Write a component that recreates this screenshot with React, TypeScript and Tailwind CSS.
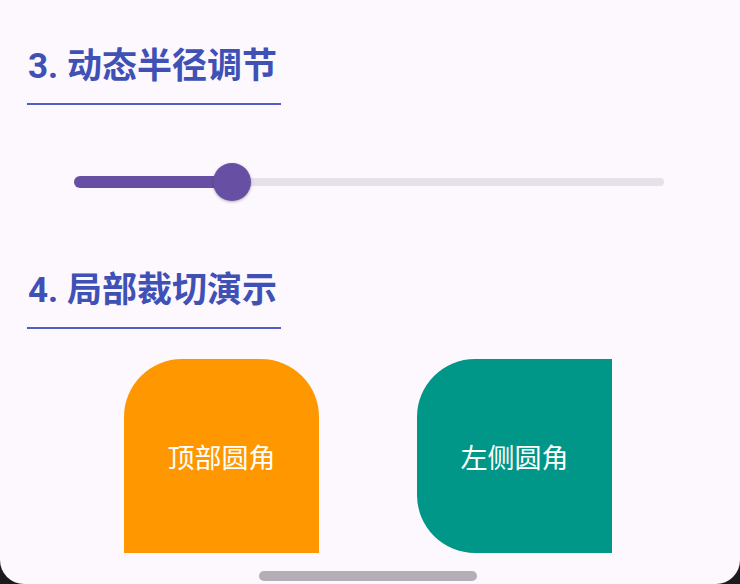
import React from "react";

const font = { fontFamily: '"Noto Sans CJK SC", "Roboto", sans-serif' };
const headFont = { fontFamily: '"Roboto", "Noto Sans CJK SC", sans-serif' };

function Heading({ text }: { text: string }) {
  return (
    <div className="flex flex-col">
      <div className="text-[35px] leading-[40px] font-bold text-[#3f51b5]" style={headFont}>{text}</div>
      <div className="mt-[16px] h-[2px] w-[254px] -ml-[1px] bg-[#4d5fc2]" />
    </div>
  );
}

export default function App() {
  return (
    <div className="w-[740px] h-[584px] overflow-hidden bg-[#1b1b1b]" style={font}>
      <div className="relative w-full h-full bg-[#fdf7fe] rounded-b-[24px] overflow-hidden">
        <div className="flex flex-col pl-[28px] pt-[47px]">
          <Heading text="3. 动态半径调节" />
          <div className="mt-[58px] ml-[46px] w-[590px] h-[38px] relative flex items-center">
            <div className="w-full h-[8px] rounded-full bg-[#e6e0e9]" />
            <div className="absolute left-0 top-[13px] h-[12px] w-[160px] rounded-full bg-[#6750a4]" />
            <div className="absolute left-[139px] top-0 w-[38px] h-[38px] rounded-full bg-[#6750a4] shadow-[0_1px_3px_rgba(0,0,0,0.3)]" />
          </div>
          <div className="mt-[70px]">
            <Heading text="4. 局部裁切演示" />
          </div>
          <div className="mt-[30px] ml-[96px] flex gap-[98px]">
            <div className="w-[195px] h-[194px] bg-[#ff9800] rounded-t-[58px] flex items-center justify-center text-white text-[27px] leading-none">
              顶部圆角
            </div>
            <div className="w-[195px] h-[194px] bg-[#009688] rounded-l-[58px] flex items-center justify-center text-white text-[27px] leading-none">
              左侧圆角
            </div>
          </div>
        </div>
        <div className="absolute left-[259px] top-[571px] w-[218px] h-[10px] rounded-full bg-[#b3adb6]" />
      </div>
    </div>
  );
}
